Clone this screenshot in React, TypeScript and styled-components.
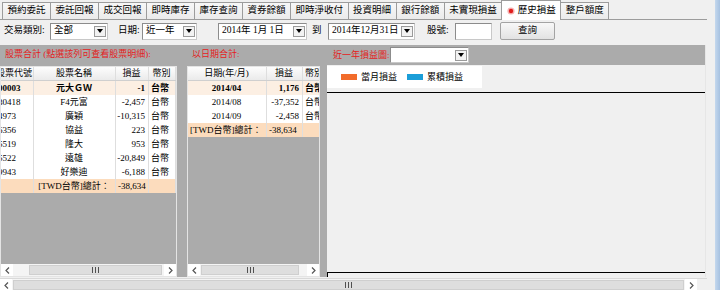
import React from "react";
import styled, { createGlobalStyle } from "styled-components";

const GlobalStyle = createGlobalStyle`
  html, body {
    margin: 0;
    padding: 0;
    background: #f0f0f0;
  }
  body {
    font-family: "Liberation Serif", "Noto Sans CJK TC", serif;
    color: #000;
  }
`;

const Window = styled.div`
  display: flex;
  width: 720px;
  height: 290px;
  overflow: hidden;
`;

const Client = styled.div`
  width: 715px;
  display: flex;
  flex-direction: column;
`;

const BlueEdge = styled.div`
  width: 5px;
  background: linear-gradient(to right, #c4d8ee, #a6c1e0);
`;

/* ---------- tabs ---------- */

const TabStrip = styled.div`
  display: flex;
  align-items: flex-end;
  box-sizing: border-box;
  width: 707px;
  height: 20px;
  padding-left: 2px;
  border-bottom: 1px solid #9c9c9c;
`;

const Tab = styled.div<{ $active?: boolean }>`
  position: relative;
  z-index: ${(p) => (p.$active ? 1 : 0)};
  display: flex;
  align-items: center;
  gap: 3px;
  box-sizing: border-box;
  height: ${(p) => (p.$active ? 20 : 17)}px;
  margin-bottom: ${(p) => (p.$active ? -1 : 0)}px;
  margin-right: -1px;
  padding: 0 4.5px;
  border: 1px solid #9c9c9c;
  border-bottom: none;
  background: ${(p) => (p.$active ? "#fff" : "linear-gradient(#f7f7f7, #ebebeb)")};
  font-size: 9.5px;
  line-height: 1;
  white-space: nowrap;
`;

const RadioDot: React.FC = () => (
  <svg width="8" height="8" viewBox="0 0 8 8">
    <circle cx="4" cy="4" r="3.6" fill="#f6b4b4" />
    <circle cx="4" cy="4" r="2.2" fill="#e01e1e" />
  </svg>
);

/* ---------- filter bar ---------- */

const FilterBar = styled.div`
  display: flex;
  align-items: center;
  height: 22px;
  padding-left: 4px;
  font-size: 9.5px;
  line-height: 1;
`;

const FieldLabel = styled.span<{ $w: number; $pl?: number }>`
  box-sizing: border-box;
  width: ${(p) => p.$w}px;
  padding-left: ${(p) => p.$pl ?? 0}px;
  white-space: nowrap;
`;

const Combo = styled.div<{ $w: number; $h?: number }>`
  display: flex;
  align-items: center;
  box-sizing: border-box;
  width: ${(p) => p.$w}px;
  height: ${(p) => p.$h ?? 17}px;
  padding-left: 3px;
  border: 1px solid #8c8c8c;
  border-right-color: #c8c8c8;
  border-bottom-color: #c8c8c8;
  background: #fff;
  white-space: nowrap;
`;

const ComboArrow = styled.span`
  display: flex;
  align-items: center;
  justify-content: center;
  box-sizing: border-box;
  width: 12px;
  height: 11px;
  margin-left: auto;
  margin-right: 1px;
  border: 1px solid #9a9a9a;
  background: #f2f2f2;
`;

const DownArrow: React.FC = () => (
  <ComboArrow>
    <svg width="6" height="4" viewBox="0 0 6 4">
      <path d="M0 0h6L3 4z" fill="#000" />
    </svg>
  </ComboArrow>
);

const TextBox = styled.div`
  box-sizing: border-box;
  width: 37px;
  height: 17px;
  border: 1px solid #8c8c8c;
  border-right-color: #c8c8c8;
  border-bottom-color: #c8c8c8;
  background: #fff;
`;

const QueryButton = styled.button`
  box-sizing: border-box;
  width: 55px;
  height: 18px;
  margin-left: 8px;
  padding: 0;
  border: 1px solid #a3a3a3;
  border-radius: 2px;
  background: linear-gradient(#f8f8f8, #e2e2e2);
  font-family: inherit;
  font-size: 9.5px;
  line-height: 1;
  color: #000;
`;

/* ---------- workspace ---------- */

const Workspace = styled.div`
  display: flex;
  box-sizing: border-box;
  width: 706px;
  height: 232px;
  margin-top: 3px;
  background: #ababab;
  border-right: 1px solid #e6e6e6;
`;

const Section = styled.div<{ $w: number; $ml?: number }>`
  display: flex;
  flex-direction: column;
  width: ${(p) => p.$w}px;
  margin-left: ${(p) => p.$ml ?? 0}px;
`;

const SectionLabel = styled.div`
  display: flex;
  align-items: center;
  box-sizing: border-box;
  height: 21px;
  padding: 0 0 3px 5px;
  color: #e4211c;
  font-size: 9px;
  line-height: 1;
  white-space: nowrap;
`;

const GridFrame = styled.div`
  flex: 1;
  display: flex;
  flex-direction: column;
  min-height: 0;
  border: 1px solid #e4e4e4;
  background: #ababab;
`;

const GridViewport = styled.div`
  flex: 1;
  overflow: hidden;
`;

const GridInner = styled.div<{ $scroll: number }>`
  width: max-content;
  margin-left: -${(p) => p.$scroll}px;
`;

type Tone = "plain" | "first" | "total" | "head";

const toneBg: Record<Tone, string> = {
  plain: "#fff",
  first: "#fcefe3",
  total: "#fcdcbd",
  head: "linear-gradient(#fdfdfd, #eaeaea)",
};

const GridRow = styled.div<{ $cols: string; $tone: Tone }>`
  display: grid;
  grid-template-columns: ${(p) => p.$cols};
  box-sizing: border-box;
  height: 14px;
  background: ${(p) => toneBg[p.$tone]};
  border-bottom: ${(p) => (p.$tone === "head" ? "1px solid #cfcfcf" : "none")};
`;

const Cell = styled.div<{ $align?: "left" | "center" | "right"; $bold?: boolean }>`
  display: flex;
  align-items: center;
  justify-content: ${(p) =>
    p.$align === "right" ? "flex-end" : p.$align === "center" ? "center" : "flex-start"};
  padding: 0 3px 0 2px;
  overflow: hidden;
  border-right: 1px solid #dedede;
  font-size: 9px;
  font-weight: ${(p) => (p.$bold ? "bold" : "normal")};
  line-height: 1;
  white-space: nowrap;
`;

/* ---------- scrollbars ---------- */

const ScrollBar = styled.div<{ $w?: number }>`
  display: flex;
  align-items: stretch;
  box-sizing: border-box;
  width: ${(p) => (p.$w ? `${p.$w}px` : "auto")};
  height: 12px;
  background: #f4f4f4;
`;

const ScrollArrow = styled.div`
  display: flex;
  align-items: center;
  justify-content: center;
  width: 12px;
  background: #fff;
`;

const ScrollTrack = styled.div`
  flex: 1;
  display: flex;
  align-items: stretch;
  padding: 1px 0;
`;

const Thumb = styled.div<{ $start: number; $size: number }>`
  display: flex;
  align-items: center;
  justify-content: center;
  box-sizing: border-box;
  width: ${(p) => p.$size}px;
  margin-left: ${(p) => p.$start}px;
  border: 1px solid #cfcfcf;
  background: #dedede;
`;

const Chevron: React.FC<{ dir: "left" | "right" }> = ({ dir }) => (
  <svg width="5" height="7" viewBox="0 0 5 7">
    <path
      d={dir === "left" ? "M4 0.5L1 3.5L4 6.5" : "M1 0.5L4 3.5L1 6.5"}
      fill="none"
      stroke="#555"
      strokeWidth="1.2"
    />
  </svg>
);

const Grip: React.FC = () => (
  <svg width="7" height="6" viewBox="0 0 7 6">
    <path d="M0.5 0v6M3.5 0v6M6.5 0v6" stroke="#505050" strokeWidth="1" />
  </svg>
);

const HScroll: React.FC<{ start: number; size: number; w?: number }> = ({ start, size, w }) => (
  <ScrollBar $w={w}>
    <ScrollArrow>
      <Chevron dir="left" />
    </ScrollArrow>
    <ScrollTrack>
      <Thumb $start={start} $size={size}>
        <Grip />
      </Thumb>
    </ScrollTrack>
    <ScrollArrow>
      <Chevron dir="right" />
    </ScrollArrow>
  </ScrollBar>
);

const MainScroll = styled.div`
  margin-top: 1px;
  width: 707px;
  border-top: 1px solid #d9d9d9;
  box-sizing: border-box;
  height: 12px;
`;

/* ---------- chart ---------- */

const ChartSection = styled.div`
  flex: 1;
  display: flex;
  flex-direction: column;
`;

const ChartHeader = styled.div`
  display: flex;
  align-items: center;
  height: 20px;
  padding-left: 13px;
  color: #e4211c;
  font-size: 9px;
  line-height: 1;
  white-space: nowrap;
`;

const ChartBody = styled.div`
  flex: 1;
  display: flex;
  flex-direction: column;
  margin-left: 7px;
  padding-top: 1px;
  background: #f0f0f0;
`;

const Legend = styled.div`
  display: flex;
  align-items: center;
  gap: 10px;
  width: 155px;
  height: 22px;
  box-sizing: border-box;
  padding-left: 14px;
  background: #fff;
  font-size: 9px;
  line-height: 1;
`;

const LegendItem = styled.span`
  display: flex;
  align-items: center;
  gap: 4px;
`;

const Swatch = styled.span<{ $color: string }>`
  width: 16px;
  height: 6px;
  background: ${(p) => p.$color};
`;

const PlotArea = styled.div`
  position: relative;
  flex: 1;
  margin: 4px 0 4px;
  border-top: 1px solid #000;
  border-bottom: 1px solid #000;

  &::after {
    content: "";
    position: absolute;
    left: 0;
    bottom: -5px;
    width: 1px;
    height: 4px;
    background: #000;
  }
`;

/* ---------- data ---------- */

const tabs = [
  "預約委託",
  "委託回報",
  "成交回報",
  "即時庫存",
  "庫存查詢",
  "資券餘額",
  "即時淨收付",
  "投資明細",
  "銀行餘額",
  "未實現損益",
  "歷史損益",
  "整戶額度",
];

const stockRows = [
  { code: "00003", name: "元大ＧＷ", pnl: "-1", first: true },
  { code: "30418", name: "F4元富", pnl: "-2,457" },
  { code: "4973", name: "廣穎", pnl: "-10,315" },
  { code: "6356", name: "協益", pnl: "223" },
  { code: "5519", name: "隆大", pnl: "953" },
  { code: "5522", name: "遠雄", pnl: "-20,849" },
  { code: "9943", name: "好樂迪", pnl: "-6,188" },
];

const dateRows = [
  { month: "2014/04", pnl: "1,176", first: true },
  { month: "2014/08", pnl: "-37,352" },
  { month: "2014/09", pnl: "-2,458" },
];

const STOCK_COLS = "38px 82px 33px 27px";
const DATE_COLS = "79px 36px 30px";

const StockGrid: React.FC = () => (
  <GridFrame>
    <GridViewport>
      <GridInner $scroll={5}>
        <GridRow $cols={STOCK_COLS} $tone="head">
          <Cell $align="center">股票代號</Cell>
          <Cell $align="center">股票名稱</Cell>
          <Cell $align="center">損益</Cell>
          <Cell $align="center">幣別</Cell>
        </GridRow>
        {stockRows.map((r) => (
          <GridRow key={r.code} $cols={STOCK_COLS} $tone={r.first ? "first" : "plain"}>
            <Cell $bold={r.first}>{r.code}</Cell>
            <Cell $align="center" $bold={r.first}>
              {r.name}
            </Cell>
            <Cell $align="right" $bold={r.first}>
              {r.pnl}
            </Cell>
            <Cell $bold={r.first}>台幣</Cell>
          </GridRow>
        ))}
        <GridRow $cols={STOCK_COLS} $tone="total">
          <Cell />
          <Cell $align="center">[TWD台幣]總計：</Cell>
          <Cell>-38,634</Cell>
          <Cell />
        </GridRow>
      </GridInner>
    </GridViewport>
    <HScroll start={16} size={133} />
  </GridFrame>
);

const DateGrid: React.FC = () => (
  <GridFrame>
    <GridViewport>
      <GridInner $scroll={0}>
        <GridRow $cols={DATE_COLS} $tone="head">
          <Cell $align="center">日期(年/月)</Cell>
          <Cell $align="center">損益</Cell>
          <Cell>幣別</Cell>
        </GridRow>
        {dateRows.map((r) => (
          <GridRow key={r.month} $cols={DATE_COLS} $tone={r.first ? "first" : "plain"}>
            <Cell $align="center" $bold={r.first}>
              {r.month}
            </Cell>
            <Cell $align="right" $bold={r.first}>
              {r.pnl}
            </Cell>
            <Cell $bold={r.first}>台幣</Cell>
          </GridRow>
        ))}
        <GridRow $cols={DATE_COLS} $tone="total">
          <Cell>[TWD台幣]總計：</Cell>
          <Cell>-38,634</Cell>
          <Cell />
        </GridRow>
      </GridInner>
    </GridViewport>
    <HScroll start={1} size={98} />
  </GridFrame>
);

const App: React.FC = () => (
  <>
    <GlobalStyle />
    <Window>
      <Client>
        <TabStrip>
          {tabs.map((t) => (
            <Tab key={t} $active={t === "歷史損益"}>
              {t === "歷史損益" && <RadioDot />}
              {t}
            </Tab>
          ))}
        </TabStrip>

        <FilterBar>
          <FieldLabel $w={46}>交易類別:</FieldLabel>
          <Combo $w={58}>
            全部
            <DownArrow />
          </Combo>
          <FieldLabel $w={34} $pl={10}>
            日期:
          </FieldLabel>
          <Combo $w={55}>
            近一年
            <DownArrow />
          </Combo>
          <FieldLabel $w={21} />
          <Combo $w={89}>
            2014年 1月 1日
            <DownArrow />
          </Combo>
          <FieldLabel $w={21} $pl={5}>
            到
          </FieldLabel>
          <Combo $w={87}>
            2014年12月31日
            <DownArrow />
          </Combo>
          <FieldLabel $w={40} $pl={12}>
            股號:
          </FieldLabel>
          <TextBox />
          <QueryButton>查詢</QueryButton>
        </FilterBar>

        <Workspace>
          <Section $w={177}>
            <SectionLabel>股票合計 (點選該列可查看股票明細):</SectionLabel>
            <StockGrid />
          </Section>
          <Section $w={133} $ml={10}>
            <SectionLabel>以日期合計:</SectionLabel>
            <DateGrid />
          </Section>
          <ChartSection>
            <ChartHeader>
              近一年損益圖:
              <Combo $w={79} $h={16}>
                <DownArrow />
              </Combo>
            </ChartHeader>
            <ChartBody>
              <Legend>
                <LegendItem>
                  <Swatch $color="#f26c2b" />
                  當月損益
                </LegendItem>
                <LegendItem>
                  <Swatch $color="#1b9ed8" />
                  累積損益
                </LegendItem>
              </Legend>
              <PlotArea />
            </ChartBody>
          </ChartSection>
        </Workspace>

        <MainScroll>
          <HScroll start={1} size={671} w={697} />
        </MainScroll>
      </Client>
      <BlueEdge />
    </Window>
  </>
);

export default App;
